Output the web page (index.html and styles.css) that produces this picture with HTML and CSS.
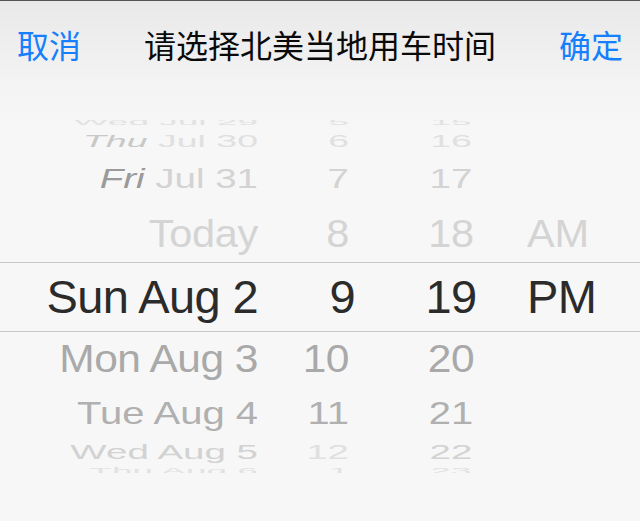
FILE: index.html
```html
<!DOCTYPE html>
<html lang="zh">
<head>
<meta charset="utf-8">
<title>请选择北美当地用车时间</title>
<link rel="stylesheet" href="styles.css">
</head>
<body>
<div class="sheet">
  <header class="bar">
    <span class="act">取消</span>
    <h1 class="title">请选择北美当地用车时间</h1>
    <span class="act">确定</span>
  </header>
  <div class="picker">
    <div class="wheel">
      <div class="row r-4"><span class="date">Wed Jul 29</span><span class="hour">5</span><span class="min">15</span><span class="ampm"></span></div>
      <div class="row r-3"><span class="date"><i class="day">Thu</i> Jul 30</span><span class="hour">6</span><span class="min">16</span><span class="ampm"></span></div>
      <div class="row r-2"><span class="date"><i class="day">Fri</i> Jul 31</span><span class="hour">7</span><span class="min">17</span><span class="ampm"></span></div>
      <div class="row r-1"><span class="date">Today</span><span class="hour">8</span><span class="min">18</span><span class="ampm">AM</span></div>
      <div class="row sel"><span class="date">Sun Aug 2</span><span class="hour">9</span><span class="min">19</span><span class="ampm">PM</span></div>
      <div class="row r1"><span class="date">Mon Aug 3</span><span class="hour">10</span><span class="min">20</span><span class="ampm"></span></div>
      <div class="row r2"><span class="date">Tue Aug 4</span><span class="hour">11</span><span class="min">21</span><span class="ampm"></span></div>
      <div class="row r3"><span class="date">Wed Aug 5</span><span class="hour">12</span><span class="min">22</span><span class="ampm"></span></div>
      <div class="row r4"><span class="date">Thu Aug 6</span><span class="hour">1</span><span class="min">23</span><span class="ampm"></span></div>
    </div>
  </div>
</div>
</body>
</html>
```
FILE: styles.css
```css
* { box-sizing: border-box; }
html, body {
  margin: 0;
  padding: 0;
}
body {
  width: 640px;
  height: 521px;
  overflow: hidden;
  background: #f7f7f7;
}
.sheet {
  height: 521px;
  border-top: 1px solid #555;
  background: linear-gradient(#e9e9e9 0px, #f4f4f4 90px, #f7f7f7 130px);
}
.bar {
  height: 89px;
  display: flex;
  align-items: center;
  justify-content: space-between;
  padding: 0 17px 4px;
  font-family: "Noto Sans CJK SC", sans-serif;
  font-size: 32px;
  line-height: 1;
}
.act {
  color: #167ffb;
}
.title {
  margin: 0;
  font-size: 32px;
  font-weight: normal;
  color: #0a0a0a;
}
.picker {
  margin-top: 30px;
  height: 353px;
  overflow: hidden;
}
.wheel {
  margin-top: -8px;
  font-family: "Liberation Sans", Arial, Helvetica, sans-serif;
  white-space: nowrap;
}
.row {
  display: grid;
  grid-template-columns: 258px 97px 148px 1fr;
}
.row > span {
  display: block;
}
.date { text-align: right; }
.hour { text-align: right; padding-right: 6px; }
.min { text-align: center; padding-left: 44px; }
.ampm { text-align: left; padding-left: 24px; }
.day { font-style: italic; }

.r-4 { height: 20px; line-height: 20px; font-size: 37px; color: #e2e2e2; }
.r-4 > span { transform: scaleY(.22); }

.r-3 { height: 28px; line-height: 28px; font-size: 37.5px; color: #e0e0e0; }
.r-3 > span { transform: translateY(-5px) scaleY(.45); }
.r-3 .day { color: #c8c8c8; }

.r-2 { height: 46px; line-height: 46px; font-size: 38.5px; color: #d3d3d3; }
.r-2 > span { transform: translateY(-4px) scaleY(.73); }
.r-2 .day { color: #9a9a9a; }

.r-1 { height: 56px; line-height: 56px; font-size: 41.5px; letter-spacing: -0.3px; color: #d4d4d4; }
.r-1 > span { transform: scaleY(.94); }

.sel {
  height: 70px;
  line-height: 68px;
  border-top: 1px solid #c8c8c8;
  border-bottom: 1px solid #c8c8c8;
  font-size: 47px;
  letter-spacing: -0.6px;
  color: #2b2b2b;
}
.sel .hour { padding-right: 0; }

.r1 { height: 54px; line-height: 54px; font-size: 42.5px; letter-spacing: -0.5px; color: #a9a9a9; }
.r1 > span { transform: scaleY(.92); }

.r2 { height: 47px; line-height: 47px; font-size: 40px; color: #b0b0b0; }
.r2 > span { transform: translateY(4px) scaleY(.77); }

.r3 { height: 28px; line-height: 28px; font-size: 38.5px; color: #d2d2d2; }
.r3 > span { transform: translateY(5px) scaleY(.51); }
.r3 .hour { color: #e0e0e0; }

.r4 { height: 20px; line-height: 20px; font-size: 37px; color: #e2e2e2; }
.r4 > span { transform: scaleY(.22); }
```
